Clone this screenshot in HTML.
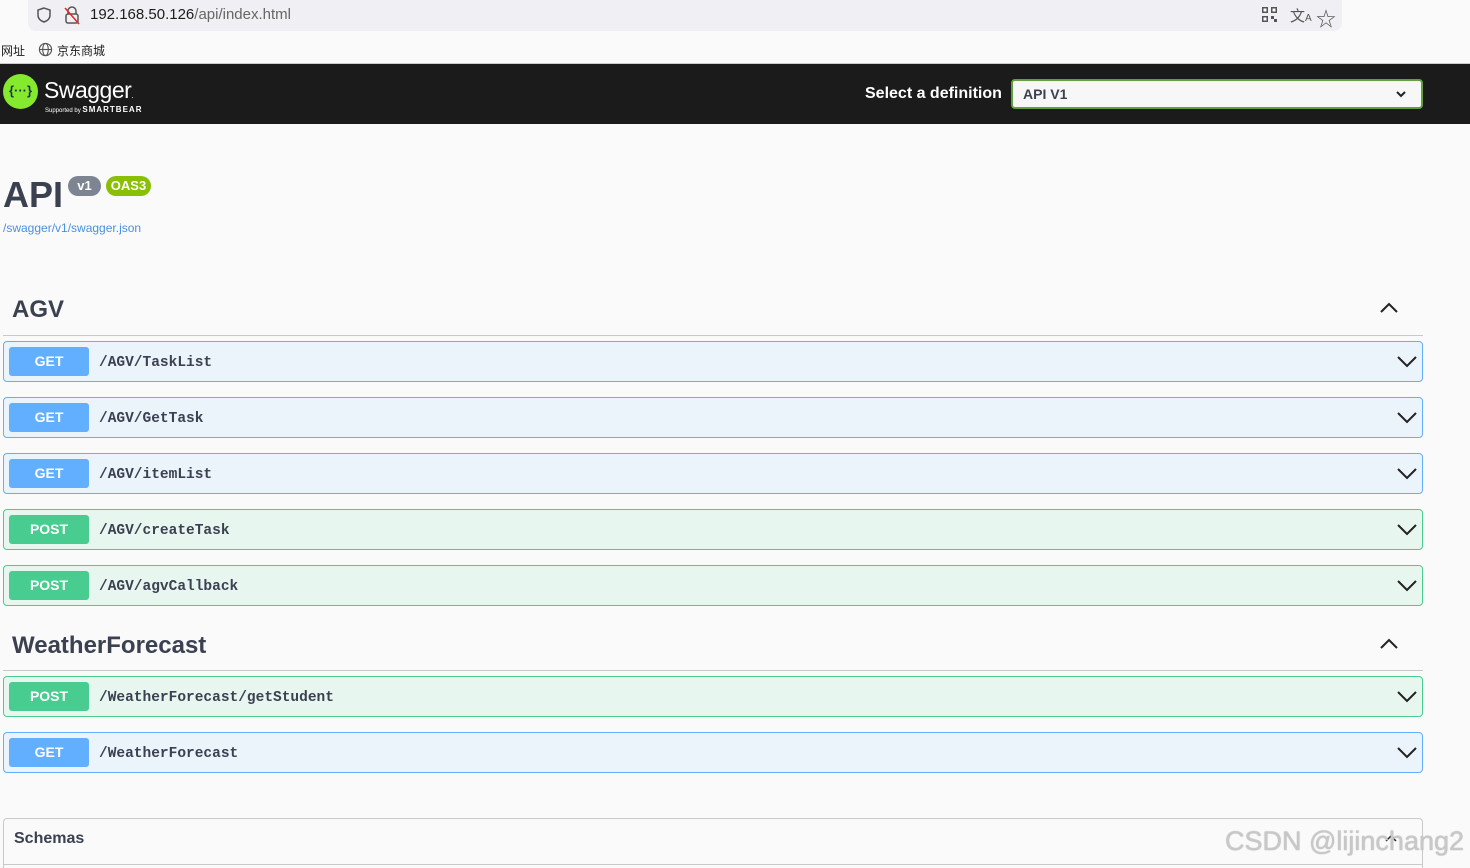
<!DOCTYPE html>
<html style="overflow:hidden;height:868px"><head><meta charset="utf-8"><style>
*{margin:0;padding:0;box-sizing:border-box}
body{width:1470px;height:868px;overflow:hidden;background:#fafafa;font-family:"Liberation Sans","Noto Sans CJK SC",sans-serif;position:relative;color:#3b4151}
.abs{position:absolute;white-space:nowrap}
.url{left:28px;top:0;width:1314px;height:31px;background:#f0f0f4;border-radius:0 0 8px 8px}
.op{position:absolute;left:3px;width:1420px;height:41px;border-radius:4px;border:1px solid}
.get{background:#ebf3fb;border-color:#61affe}
.post{background:#e8f6f0;border-color:#49cc90}
.op .m{position:absolute;left:5px;top:5px;width:80px;height:29px;border-radius:3px;color:#fff;font-weight:bold;font-size:14px;text-align:center;line-height:29px}
.get .m{background:#61affe}.post .m{background:#49cc90}
.op .p{position:absolute;left:95px;top:13px;font-family:"Liberation Mono",monospace;font-weight:bold;font-size:14.5px;color:#3b4151}
.op svg{position:absolute;right:5px;top:12px}
.sec{position:absolute;left:12px;font-size:24px;font-weight:bold;color:#3b4151}
.line{position:absolute;left:3px;width:1420px;height:1px;background:#c9c9cc}
</style></head><body>
<div class="abs url"></div>
<svg class="abs" style="left:35px;top:6px" width="18" height="18" viewBox="0 0 18 18"><path d="M9 2L3 4v5c0 4 3 6 6 7 3-1 6-3 6-7V4z" fill="none" stroke="#555" stroke-width="1.5"/></svg>
<svg class="abs" style="left:63px;top:5px" width="18" height="20" viewBox="0 0 18 20"><rect x="3" y="9" width="12" height="9" rx="2" fill="none" stroke="#555" stroke-width="1.5"/><path d="M5 9V6a4 4 0 018 0v3" fill="none" stroke="#555" stroke-width="1.5"/><path d="M2 3l14 16" stroke="#e22" stroke-width="1.5"/></svg>
<div class="abs" style="left:90px;top:6px;font-size:15px;color:#1c1c1c">192.168.50.126<span style="color:#666">/api/index.html</span></div>
<svg class="abs" style="left:1262px;top:7px" width="15" height="15" viewBox="0 0 15 15"><g fill="#555"><rect x="0" y="0" width="6" height="6"/><rect x="9" y="0" width="6" height="6"/><rect x="0" y="9" width="6" height="6"/><rect x="9" y="9" width="3" height="3"/><rect x="12" y="12" width="3" height="3"/></g><g fill="#fff"><rect x="1.5" y="1.5" width="3" height="3"/><rect x="10.5" y="1.5" width="3" height="3"/><rect x="1.5" y="10.5" width="3" height="3"/></g></svg>
<div class="abs" style="left:1290px;top:5px;font-size:15px;color:#555">文<span style="font-size:10px">A</span></div>
<div class="abs" style="left:1316px;top:3px;font-size:20px;color:#555">☆</div>
<div class="abs" style="left:1px;top:42px;font-size:12px;color:#1c1c1c">网址</div>
<svg class="abs" style="left:38px;top:42px" width="15" height="15" viewBox="0 0 16 16"><circle cx="8" cy="8" r="6.5" fill="none" stroke="#555" stroke-width="1.2"/><ellipse cx="8" cy="8" rx="3" ry="6.5" fill="none" stroke="#555" stroke-width="1.2"/><path d="M1.5 8h13" stroke="#555" stroke-width="1.2"/></svg>
<div class="abs" style="left:57px;top:42px;font-size:12px;color:#1c1c1c">京东商城</div>
<div class="abs" style="left:0;top:63px;width:1470px;height:1px;background:#ccc"></div>
<div class="abs" style="left:0;top:64px;width:1470px;height:60px;background:#1b1b1b"></div>
<div class="abs" style="left:3px;top:74px;width:35px;height:35px;border-radius:50%;background:#85ea2d;color:#173647;font-size:13px;font-weight:bold;text-align:center;line-height:34px">{···}</div>
<div class="abs" style="left:44px;top:77px;font-size:23px;color:#fff;letter-spacing:-0.5px">Swagger<span style="font-size:8px">.</span></div>
<div class="abs" style="left:45px;top:105px;font-size:6px;color:#fff">Supported by <b style="font-size:8px;letter-spacing:1px">SMARTBEAR</b></div>
<div class="abs" style="left:865px;top:85px;font-size:16px;font-weight:bold;color:#fff">Select a definition</div>
<div class="abs" style="left:1011px;top:79px;width:412px;height:30px;border:2px solid #62a03f;border-radius:4px;background:#f7f7f7"></div>
<div class="abs" style="left:1023px;top:86px;font-size:14px;font-weight:bold;color:#3b4151">API V1</div>
<svg class="abs" style="left:1395px;top:89px" width="12" height="10" viewBox="0 0 12 10"><path d="M2 3l4 4 4-4" fill="none" stroke="#222" stroke-width="2"/></svg>
<div class="abs" style="left:3px;top:174px;font-size:36px;font-weight:bold;color:#3b4151">API</div>
<div class="abs" style="left:68px;top:176px;width:33px;height:20px;border-radius:10px;background:#7d8492;color:#fff;font-size:13px;font-weight:bold;text-align:center;line-height:20px">v1</div>
<div class="abs" style="left:106px;top:176px;width:45px;height:20px;border-radius:10px;background:#89bf04;color:#fff;font-size:13px;font-weight:bold;text-align:center;line-height:20px">OAS3</div>
<div class="abs" style="left:3px;top:221px;font-size:12px;color:#4990e2">/swagger/v1/swagger.json</div>

<div class="sec" style="top:296px">AGV</div>
<svg class="abs" style="left:1380px;top:302px" width="18" height="12" viewBox="0 0 18 12"><path d="M1 10l8-8 8 8" fill="none" stroke="#222" stroke-width="2"/></svg>
<div class="line" style="top:335px"></div>
<div class="op get" style="top:341px"><div class="m">GET</div><div class="p">/AGV/TaskList</div><svg width="20" height="14" viewBox="0 0 20 14"><path d="M1 3l9 9 9-9" fill="none" stroke="#222" stroke-width="2"/></svg></div>
<div class="op get" style="top:397px"><div class="m">GET</div><div class="p">/AGV/GetTask</div><svg width="20" height="14" viewBox="0 0 20 14"><path d="M1 3l9 9 9-9" fill="none" stroke="#222" stroke-width="2"/></svg></div>
<div class="op get" style="top:453px"><div class="m">GET</div><div class="p">/AGV/itemList</div><svg width="20" height="14" viewBox="0 0 20 14"><path d="M1 3l9 9 9-9" fill="none" stroke="#222" stroke-width="2"/></svg></div>
<div class="op post" style="top:509px"><div class="m">POST</div><div class="p">/AGV/createTask</div><svg width="20" height="14" viewBox="0 0 20 14"><path d="M1 3l9 9 9-9" fill="none" stroke="#222" stroke-width="2"/></svg></div>
<div class="op post" style="top:565px"><div class="m">POST</div><div class="p">/AGV/agvCallback</div><svg width="20" height="14" viewBox="0 0 20 14"><path d="M1 3l9 9 9-9" fill="none" stroke="#222" stroke-width="2"/></svg></div>

<div class="sec" style="top:632px">WeatherForecast</div>
<svg class="abs" style="left:1380px;top:638px" width="18" height="12" viewBox="0 0 18 12"><path d="M1 10l8-8 8 8" fill="none" stroke="#222" stroke-width="2"/></svg>
<div class="line" style="top:670px"></div>
<div class="op post" style="top:676px"><div class="m">POST</div><div class="p">/WeatherForecast/getStudent</div><svg width="20" height="14" viewBox="0 0 20 14"><path d="M1 3l9 9 9-9" fill="none" stroke="#222" stroke-width="2"/></svg></div>
<div class="op get" style="top:732px"><div class="m">GET</div><div class="p">/WeatherForecast</div><svg width="20" height="14" viewBox="0 0 20 14"><path d="M1 3l9 9 9-9" fill="none" stroke="#222" stroke-width="2"/></svg></div>

<div class="abs" style="left:3px;top:818px;width:1420px;height:50px;border:1px solid #c9c9cc;border-bottom:none;border-radius:4px 4px 0 0"></div>
<div class="abs" style="left:3px;top:864px;width:1420px;height:1px;background:#c9c9cc"></div>
<div class="abs" style="left:14px;top:830px;font-size:16px;font-weight:bold;color:#3b4151">Schemas</div>
<svg class="abs" style="left:1385px;top:834px" width="12" height="8" viewBox="0 0 12 8"><path d="M1 7l5-5 5 5" fill="none" stroke="#222" stroke-width="1.5"/></svg>
<div class="abs" style="left:1225px;top:826px;font-size:27px;color:#c8c8c8;text-shadow:0 0 1px #999">CSDN @lijinchang2</div>
</body></html>
